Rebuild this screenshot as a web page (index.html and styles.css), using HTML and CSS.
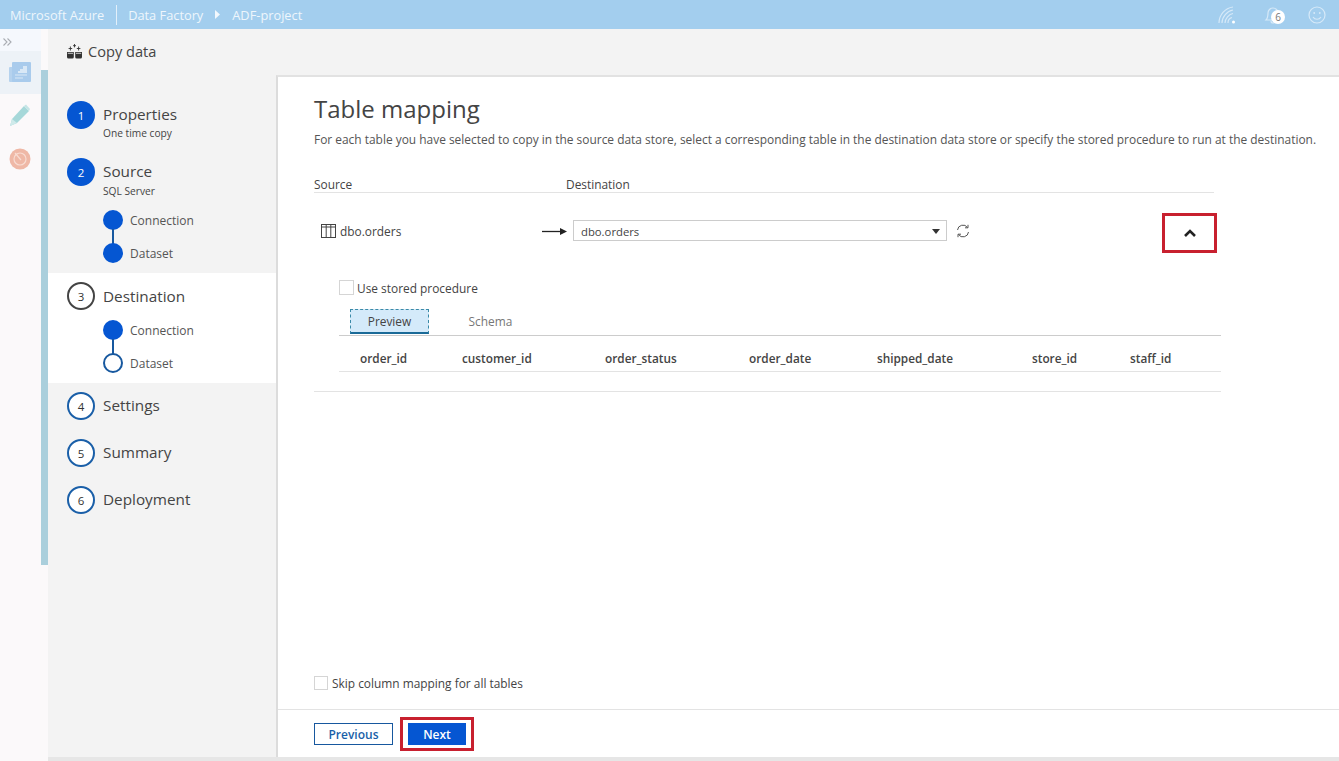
FILE: index.html
```html
<!DOCTYPE html>
<html lang="en">
<head>
<meta charset="utf-8">
<title>Copy data</title>
<link rel="stylesheet" href="styles.css">
</head>
<body>
<header class="topbar">
  <span class="brand">Microsoft Azure</span>
  <span class="crumb">Data Factory</span>
  <svg class="crumb-caret" width="5" height="9" viewBox="0 0 5 9"><path d="M0 0l5 4.500L0 9z" fill="#f2f8fd"/></svg>
  <span class="crumb">ADF-project</span>
  <div class="top-icons">
    <svg class="wifi" width="18" height="18" viewBox="0 0 18 18" fill="none" stroke="#d6e9f8" stroke-width="1.200"><path d="M1 17C1 9 7 2 15 1"/><path d="M4 17C4 11 9 5 15 4"/><path d="M7 17c0-4 4-9 8-9.500"/><path d="M10 17c0-3 2-5 4-5.500"/><circle cx="15.500" cy="16" r="1.500" fill="#fff" stroke="none"/></svg>
    <span class="bell">
      <svg width="18" height="18" viewBox="0 0 18 18" fill="none" stroke="#d6e9f8" stroke-width="1.200"><path d="M2 14c2-2 2-4 2-7a5 5 0 0 1 10 0c0 3 0 5 2 7z"/><path d="M7 15a2 2 0 0 0 4 0"/></svg>
      <span class="badge">6</span>
    </span>
    <svg width="18" height="18" viewBox="0 0 18 18" fill="none" stroke="#d6e9f8" stroke-width="1.200"><circle cx="9" cy="9" r="8"/><circle cx="6.200" cy="7" r=".9" fill="#d6e9f8" stroke="none"/><circle cx="11.800" cy="7" r=".9" fill="#d6e9f8" stroke="none"/><path d="M5 11c2 3 6 3 8 0"/></svg>
  </div>
</header>

<div class="shell">
  <aside class="side">
    <div class="rail">
      <div class="expand">
        <svg width="9" height="8" viewBox="0 0 9 8" fill="none" stroke="#a9adb3" stroke-width="1.100"><path d="M0.500 0.500L4 4 .5 7.500M4.500 0.500L8 4 4.500 7.500"/></svg>
      </div>
      <div class="rail-item rail-active">
        <svg width="22" height="21" viewBox="0 0 22 21"><rect x="0" y="5" width="14" height="15" rx="1" fill="#b5d2ee"/><rect x="3" y="0" width="19" height="20" rx="1" fill="#a9cbec"/><path d="M9 9h2V7h3V4h4v7H9z" fill="#d9e8f6"/><path d="M6 13h12M6 16h8" stroke="#d9e8f6"/></svg>
      </div>
      <div class="rail-item">
        <svg width="22" height="23" viewBox="0 0 22 23"><path d="M1 22l2-7L15 2l5 5L8 19z" fill="#a6d8d9"/><path d="M15 2l2-1.500 4 4.500-1 2z" fill="#c5e5e6"/><path d="M1 22l2-7 5 4z" fill="#cfeaea"/></svg>
      </div>
      <div class="rail-item rail-last">
        <svg width="22" height="22" viewBox="0 0 22 22"><circle cx="11" cy="11" r="10.500" fill="#efb8a6"/><circle cx="11" cy="11" r="6" fill="none" stroke="#f8dcd2" stroke-width="1.200"/><path d="M6 5l6 7" stroke="#f8dcd2" stroke-width="1.200"/></svg>
      </div>
    </div>
    <div class="strip"></div>
  </aside>

  <main class="panel">
    <div class="panel-title">
      <svg width="15" height="15" viewBox="0 0 15 15"><path d="M0 8h6.800v5a1.500 1.500 0 0 1-1.500 1.500H1.500A1.500 1.500 0 0 1 0 13z" fill="#333"/><path d="M.8 9.300h5.200" stroke="#f3f3f3" stroke-width=".8"/><path d="M8.200 8H15v5a1.500 1.500 0 0 1-1.500 1.500h-3.800A1.500 1.500 0 0 1 8.200 13z" fill="#333"/><path d="M9 9.300h5.200" stroke="#f3f3f3" stroke-width=".8"/><path d="M3.400 2.500v4M1.600 4.500h3.600M11.600 2.500v4M9.800 4.500h3.600M7.500 0v3.400M6 1.700h3" stroke="#333" stroke-width=".9"/></svg>
      <span>Copy data</span>
    </div>
    <div class="panel-body">
      <nav class="steps">
        <div class="step step-first">
          <span class="num num-fill">1</span>
          <div><div class="step-name">Properties</div><div class="step-sub step-sub-tight">One time copy</div></div>
        </div>
        <div class="step step-two">
          <span class="num num-fill">2</span>
          <div><div class="step-name">Source</div><div class="step-sub">SQL Server</div></div>
        </div>
        <div class="subs">
          <div class="sub sub-link"><span class="dot"></span><span>Connection</span></div>
          <div class="sub"><span class="dot"></span><span>Dataset</span></div>
        </div>
        <div class="current">
          <div class="step step-cur">
            <span class="num num-cur">3</span>
            <div class="step-name">Destination</div>
          </div>
          <div class="subs subs-cur">
            <div class="sub sub-link"><span class="dot"></span><span>Connection</span></div>
            <div class="sub"><span class="dot dot-open"></span><span>Dataset</span></div>
          </div>
        </div>
        <div class="step step-plain step-four"><span class="num num-line">4</span><div class="step-name">Settings</div></div>
        <div class="step step-plain"><span class="num num-line">5</span><div class="step-name">Summary</div></div>
        <div class="step step-plain"><span class="num num-line">6</span><div class="step-name">Deployment</div></div>
      </nav>

      <section class="content">
        <div class="content-main">
          <h1 class="title">Table mapping</h1>
          <p class="desc">For each table you have selected to copy in the source data store, select a corresponding table in the destination data store or specify the stored procedure to run at the destination.</p>
          <div class="map-head"><span class="col-src">Source</span><span>Destination</span></div>
          <div class="map-row">
            <div class="src-cell">
              <svg width="15" height="14" viewBox="0 0 15 14" fill="none" stroke="#444"><rect x=".5" y=".5" width="14" height="13"/><path d="M.5 3h14M5.200 .5v13M9.800 .5v13"/></svg>
              <span>dbo.orders</span>
            </div>
            <svg class="arrow" width="25" height="7" viewBox="0 0 25 7"><path d="M0 3.500h19" stroke="#222" stroke-width="1.300"/><path d="M18 0l7 3.500-7 3.500z" fill="#222"/></svg>
            <div class="select"><span>dbo.orders</span><svg width="8" height="5" viewBox="0 0 8 5"><path d="M0 0h8L4 5z" fill="#333"/></svg></div>
            <svg class="refresh" width="14" height="14" viewBox="0 0 14 14" fill="none" stroke="#555"><path d="M1.500 6A5.500 5.500 0 0 1 11.500 3.500"/><path d="M12.500 8A5.500 5.500 0 0 1 2.500 10.500"/><path d="M12 .8v3h-3M2 13.200v-3h3"/></svg>
            <div class="collapse"><svg width="12" height="8" viewBox="0 0 12 8" fill="none" stroke="#222" stroke-width="2.600"><path d="M1 7l5-5 5 5"/></svg></div>
          </div>
          <div class="detail">
            <label class="check check-proc"><span class="box"></span><span>Use stored procedure</span></label>
            <div class="tabs">
              <span class="tab tab-on">Preview</span>
              <span class="tab tab-off">Schema</span>
            </div>
            <div class="cols">
              <span>order_id</span><span>customer_id</span><span>order_status</span><span>order_date</span><span>shipped_date</span><span>store_id</span><span>staff_id</span>
            </div>
          </div>
          <div class="end-line"></div>
          <label class="check check-skip"><span class="box"></span><span>Skip column mapping for all tables</span></label>
        </div>
        <footer class="actions">
          <button class="btn btn-prev" type="button">Previous</button>
          <span class="next-mark"><button class="btn btn-next" type="button">Next</button></span>
        </footer>
      </section>
    </div>
  </main>
</div>
</body>
</html>
```
FILE: styles.css
```css
* { box-sizing: border-box; }
html, body { margin: 0; height: 100%; overflow: hidden; }
body {
  display: flex;
  flex-direction: column;
  height: 761px;
  background: #fff;
  color: #444;
  font-family: "Open Sans", "Noto Sans", sans-serif;
  font-size: 12px;
}
.topbar {
  display: flex;
  align-items: center;
  flex: 0 0 29px;
  background: #a3ceee;
  color: #eef6fc;
  font-size: 12.800px;
  padding-left: 10px;
}
.brand {
  padding-right: 12px;
  margin-right: 11px;
  height: 20px;
  line-height: 20px;
  border-right: 1px solid #e3f0fa;
}
.crumb-caret { margin: 0 12px; }
.top-icons { display: flex; align-items: center; gap: 26px; margin-left: auto; padding-right: 13px; }
.bell { position: relative; display: flex; margin-left: 2px; }
.badge {
  position: absolute;
  left: 7px;
  top: 4px;
  width: 14px;
  height: 14px;
  border-radius: 50%;
  background: #fff;
  color: #777;
  font-size: 10px;
  line-height: 14px;
  text-align: center;
}
.shell { display: flex; flex: 1; min-height: 0; }
.side { display: flex; flex: 0 0 48px; background: #fbf9fa; }
.rail { flex: 0 0 41px; }
.expand { height: 22px; padding: 9px 0 0 3px; line-height: 0; background: #f5f8fd; }
.rail-item { display: flex; align-items: center; justify-content: center; height: 43px; padding-right: 1px; }
.rail-active { background: #edf2f7; }
.strip { flex: 0 0 7px; height: 495px; margin-top: 41px; background: #aacfdc; }
.panel { flex: 1; display: flex; flex-direction: column; background: #f3f3f3; min-width: 0; }
.panel-title {
  display: flex;
  align-items: center;
  gap: 6px;
  flex: 0 0 46px;
  padding: 0 0 2px 19px;
  font-size: 14.600px;
  color: #444;
}
.panel-body { flex: 1; display: flex; min-height: 0; border-bottom: 4px solid #e6e6e6; }
.steps { flex: 0 0 228px; }
.step { display: flex; align-items: flex-start; gap: 8px; padding-left: 19px; }
.step-first { margin-top: 26px; height: 28px; }
.step-two { margin-top: 29px; height: 28px; }
.step-name { font-size: 15.300px; line-height: 26px; color: #444; }
.step-sub { font-size: 10.200px; line-height: 14px; color: #444; }
.step-sub-tight { margin-top: -1px; }
.num {
  display: flex;
  align-items: center;
  justify-content: center;
  flex: 0 0 28px;
  width: 28px;
  height: 28px;
  border-radius: 50%;
  font-size: 11.500px;
}
.num-fill { background: #0556d2; color: #fff; }
.num-line { border: 2px solid #1a5fa8; color: #333; background: #fff; }
.num-cur { border: 2px solid #444; color: #333; background: #fff; }
.subs { padding: 24px 0 0 55px; }
.sub { position: relative; display: flex; align-items: center; gap: 7px; height: 20px; margin-bottom: 13px; font-size: 12px; color: #555; }
.sub:last-child { margin-bottom: 0; }
.sub-link::after {
  content: "";
  position: absolute;
  left: 9px;
  top: 19px;
  width: 2px;
  height: 15px;
  background: #17589f;
}
.dot { flex: 0 0 20px; height: 20px; border-radius: 50%; background: #0556d2; }
.dot-open { background: #fff; border: 2px solid #17589f; }
.current { height: 110px; margin-top: 10px; background: #fff; padding-top: 9px; }
.step-cur { height: 28px; }
.step-cur .step-name { line-height: 28px; }
.subs-cur { padding-top: 10px; }
.step-plain { height: 28px; margin-top: 19px; }
.step-four { margin-top: 9px; }
.content {
  flex: 1;
  display: flex;
  flex-direction: column;
  min-width: 0;
  background: #fff;
  border-left: 2px solid #dcdcdc;
  border-top: 2px solid #e2e2e2;
}
.content-main { flex: 1; padding: 0 0 0 36px; }
.title { margin: 15px 0 0; font-size: 24px; line-height: 34px; font-weight: 400; color: #444; }
.desc { margin: 4px 0 0; font-size: 11.930px; line-height: 18px; white-space: nowrap; color: #555; }
.map-head { display: flex; width: 900px; height: 24px; margin-top: 21px; padding-top: 5px; line-height: 20px; border-bottom: 1px solid #e3e3e3; font-size: 11.900px; color: #444; }
.col-src { flex: 0 0 252px; }
.map-row { display: flex; align-items: center; width: 903px; height: 60px; margin-top: 8px; font-size: 11.900px; }
.src-cell { display: flex; align-items: center; flex: 0 0 228px; gap: 4px; padding-left: 7px; }
.arrow { flex: 0 0 25px; margin-right: 6px; }
.select {
  display: flex;
  align-items: center;
  justify-content: space-between;
  flex: 0 0 374px;
  height: 21px;
  margin-bottom: 2px;
  padding: 2px 6px 0 7px;
  border: 1px solid #ccc;
  font-size: 11.300px;
}
.refresh { margin-left: 9px; }
.collapse {
  display: flex;
  align-items: center;
  justify-content: center;
  width: 55px;
  height: 40px;
  margin-left: auto;
  margin-top: 4px;
  padding-left: 1px;
  border: 3px solid #c8202f;
}
.detail { width: 882px; margin-left: 25px; }
.check { display: flex; align-items: center; gap: 3px; font-size: 11.900px; color: #444; }
.box { width: 15px; height: 15px; background: #fff; border: 1px solid #d5d5d5; }
.check-proc { margin-top: 19px; height: 15px; }
.tabs { display: flex; height: 34px; padding: 7px 0 0 11px; margin-top: 7px; border-bottom: 1px solid #ccc; font-size: 11.900px; }
.tab { width: 79px; height: 25px; line-height: 23px; text-align: center; color: #777; }
.tab-off { margin-left: 22px; padding-top: 1px; }
.tab-on {
  background: #d4eafa;
  color: #444;
  border: 1px dashed #3a8aa8;
  border-bottom: 2px solid #1a6a98;
}
.cols {
  display: grid;
  grid-template-columns: 102px 143px 144px 128px 155px 98px 1fr;
  align-items: center;
  height: 36px;
  padding-top: 8px;
  padding-left: 21px;
  border-bottom: 1px solid #e3e3e3;
  font-size: 11.800px;
  font-weight: 600;
  color: #444;
}
.end-line { width: 907px; margin-top: 19px; border-top: 1px solid #e3e3e3; }
.check-skip { height: 15px; margin-top: 283px; gap: 4px; }
.check-skip .box { width: 14px; height: 14px; }
.actions {
  display: flex;
  align-items: center;
  height: 48px;
  padding-top: 1px;
  padding-left: 36px;
  border-top: 1px solid #e3e3e3;
}
.btn {
  height: 22px;
  padding: 0;
  border-radius: 0;
  font-family: inherit;
  font-size: 12px;
  font-weight: 600;
}
.btn-prev { width: 79px; background: #fff; color: #1a5fa8; border: 1px solid #17589f; }
.next-mark { display: flex; margin-left: 7px; padding: 3px 5px; border: 3px solid #c8202f; }
.btn-next { width: 58px; background: #0556d2; color: #fff; border: 0; }
```
